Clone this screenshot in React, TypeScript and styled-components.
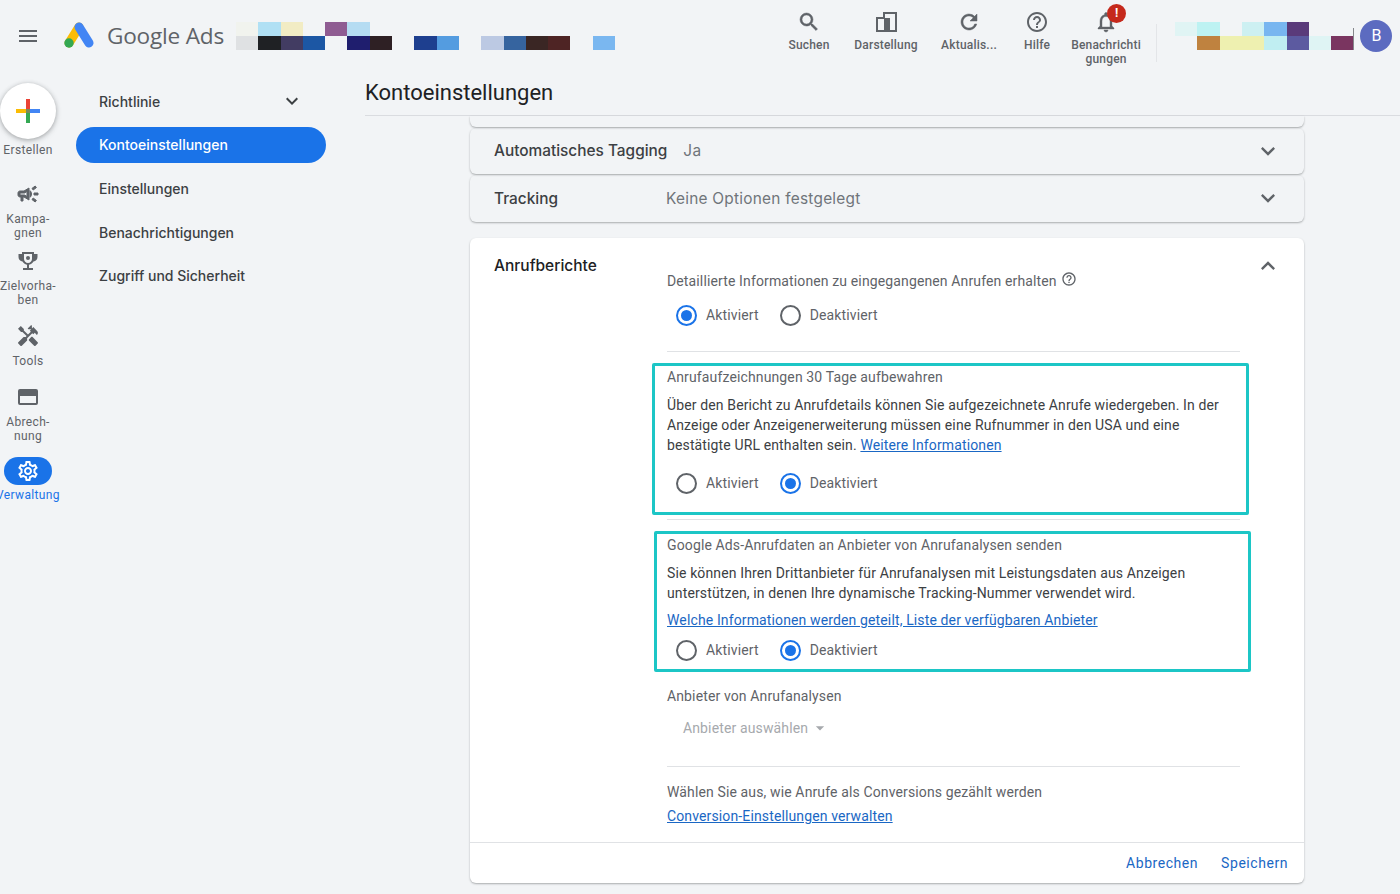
import React from 'react';
import styled, { createGlobalStyle } from 'styled-components';
import {
    MdMenu,
    MdSearch,
    MdRefresh,
    MdHelpOutline,
    MdNotificationsNone,
    MdOutlineCampaign,
    MdHandyman,
    MdOutlineSettings,
    MdKeyboardArrowDown,
    MdKeyboardArrowUp,
    MdArrowDropDown,
} from 'react-icons/md';

const GlobalStyle = createGlobalStyle`
    html, body {
        margin: 0;
        padding: 0;
        background: #f2f4f6;
    }
    * {
        box-sizing: border-box;
    }
    body {
        font-family: Roboto, "Liberation Sans", sans-serif;
    }
`;

const Page = styled.div`
    width: 1400px;
    height: 894px;
    overflow: hidden;
    display: flex;
    flex-direction: column;
    background: #f2f4f6;
`;

const Header = styled.header`
    height: 78px;
    flex: none;
    display: flex;
    align-items: flex-start;
`;

const MenuButton = styled.div`
    width: 56px;
    height: 72px;
    display: flex;
    align-items: center;
    justify-content: center;
    color: #5f6368;
    font-size: 24px;
`;

const Logo = styled.svg`
    width: 30px;
    height: 26px;
    margin: 22px 0 0 8px;
`;

const Brand = styled.div`
    margin: 20px 0 0 13px;
    width: 129px;
    font-family: "Open Sans", Roboto, sans-serif;
    font-size: 22.6px;
    line-height: 32px;
    letter-spacing: -0.2px;
    color: #5f6368;
`;

const Mosaic = styled.div<{ $cols: number }>`
    display: grid;
    grid-template-columns: repeat(${(p) => p.$cols}, 22.3px);
    grid-auto-rows: 14px;
    margin-top: 22px;
`;

const Cell = styled.div<{ $c: string }>`
    background: ${(p) => p.$c};
`;

const MosaicEdge = styled.div`
    width: 1px;
    height: 22px;
    margin-top: 28px;
    background: #85878b;
`;

const Actions = styled.div`
    margin-left: 162px;
    display: flex;
    align-items: flex-start;
`;

const Action = styled.div<{ $w: number }>`
    width: ${(p) => p.$w}px;
    padding-top: 10px;
    display: flex;
    flex-direction: column;
    align-items: center;
    color: #5f6368;
`;

const ActionIcon = styled.div`
    position: relative;
    height: 24px;
    font-size: 24px;
    line-height: 0;
    svg path[fill='none'] {
        stroke: none;
    }
`;

const Badge = styled.span`
    position: absolute;
    top: -6px;
    left: 13px;
    width: 19px;
    height: 19px;
    border-radius: 50%;
    background: #c5291c;
    color: #fff;
    font-size: 12px;
    font-weight: 700;
    line-height: 19px;
    text-align: center;
`;

const ActionLabel = styled.div`
    margin-top: 4px;
    font-size: 12px;
    line-height: 14px;
    font-weight: 500;
    letter-spacing: 0.2px;
    text-align: center;
    color: #5f6368;
`;

const HeaderDivider = styled.div`
    width: 1px;
    height: 38px;
    margin: 24px 18px 0 11px;
    background: #e3e5e8;
`;

const Avatar = styled.div`
    width: 32px;
    height: 32px;
    margin: 20px 0 0 6px;
    border-radius: 50%;
    background: #5c6bc0;
    color: #fff;
    font-size: 16px;
    line-height: 32px;
    text-align: center;
`;

const Body = styled.div`
    flex: 1;
    min-height: 0;
    display: flex;
`;

const Rail = styled.nav`
    width: 56px;
    flex: none;
    padding-top: 5px;
    display: flex;
    flex-direction: column;
    align-items: center;
`;

const CreateCircle = styled.div`
    width: 56px;
    height: 56px;
    flex: none;
    border-radius: 50%;
    background: #fff;
    box-shadow: 0 1px 4px rgba(60, 64, 67, 0.35), 0 2px 6px rgba(60, 64, 67, 0.15);
    display: flex;
    align-items: center;
    justify-content: center;
`;

const RailItem = styled.div<{ $top: number }>`
    width: 56px;
    margin-top: ${(p) => p.$top}px;
    display: flex;
    flex-direction: column;
    align-items: center;
    color: #5f6368;
`;

const RailIcon = styled.div`
    height: 24px;
    font-size: 24px;
    line-height: 0;
    svg path[fill='none'] {
        stroke: none;
    }
`;

const RailPill = styled.div`
    width: 48px;
    height: 28px;
    border-radius: 14px;
    background: #1a73e8;
    color: #fff;
    font-size: 24px;
    display: flex;
    align-items: center;
    justify-content: center;
`;

const RailLabel = styled.div<{ $active?: boolean; $top?: number }>`
    margin-top: ${(p) => p.$top ?? 6}px;
    font-size: 12px;
    line-height: 14px;
    font-weight: 400;
    letter-spacing: 0.35px;
    text-align: center;
    white-space: nowrap;
    color: ${(p) => (p.$active ? '#1a73e8' : '#5f6368')};
`;

const SubNav = styled.nav`
    width: 250px;
    flex: none;
    margin-left: 20px;
    padding-top: 5px;
    display: flex;
    flex-direction: column;
    gap: 7.7px;
`;

const SubItem = styled.div<{ $active?: boolean }>`
    height: 36px;
    padding: 0 22px 0 23px;
    border-radius: 18px;
    display: flex;
    align-items: center;
    justify-content: space-between;
    font-family: Inter, Roboto, sans-serif;
    font-size: 14px;
    font-weight: 500;
    color: ${(p) => (p.$active ? '#fff' : '#3c4043')};
    background: ${(p) => (p.$active ? '#1a73e8' : 'transparent')};
    svg {
        font-size: 24px;
        color: #3c4043;
    }
`;

const Main = styled.main`
    flex: 1;
    min-width: 0;
    margin-left: 39px;
    display: flex;
    flex-direction: column;
`;

const Title = styled.h1`
    height: 38px;
    margin: 0;
    padding-top: 1px;
    flex: none;
    border-bottom: 1px solid #dadce0;
    font-size: 22px;
    font-weight: 400;
    line-height: 28px;
    color: #202124;
`;

const Content = styled.div`
    width: 834px;
    margin-left: 105px;
    display: flex;
    flex-direction: column;
`;

const ClippedCard = styled.div`
    height: 11px;
    border-radius: 0 0 6px 6px;
    box-shadow: 0 1px 2px rgba(60, 64, 67, 0.4);
`;

const Row = styled.div<{ $height: number }>`
    height: ${(p) => p.$height}px;
    margin-top: 1px;
    padding: 0 24px 1px;
    border-radius: 6px;
    box-shadow: 0 1px 2px rgba(60, 64, 67, 0.4);
    display: flex;
    align-items: center;
    font-family: Inter, Roboto, sans-serif;
    font-size: 15.4px;
    svg {
        margin: 0 -2px 0 auto;
        font-size: 28px;
        color: #5f6368;
    }
`;

const RowTitle = styled.div`
    font-weight: 500;
    color: #3c4043;
`;

const RowValue = styled.div<{ $left: number }>`
    margin-left: ${(p) => p.$left}px;
    color: #70757a;
    font-weight: 400;
    letter-spacing: 0.25px;
`;

const Card = styled.section`
    height: 645px;
    margin-top: 16px;
    border-radius: 6px;
    background: #fff;
    box-shadow: 0 1px 2px rgba(60, 64, 67, 0.4);
    display: flex;
    flex-direction: column;
`;

const CardMain = styled.div`
    flex: 1;
    padding: 0 24px;
    display: flex;
`;

const CardTitle = styled.h2`
    width: 173px;
    flex: none;
    margin: 17px 0 0;
    font-family: Inter, Roboto, sans-serif;
    font-size: 15.5px;
    line-height: 22px;
    font-weight: 500;
    color: #202124;
`;

const Fields = styled.div`
    width: 573px;
    flex: none;
    padding-top: 33px;
`;

const Collapse = styled.div`
    margin: 14px -2px 0 auto;
    font-size: 28px;
    line-height: 0;
    color: #5f6368;
`;

const Caption = styled.div<{ $top?: number }>`
    margin-top: ${(p) => p.$top ?? 0}px;
    display: flex;
    align-items: center;
    gap: 4px;
    font-size: 14px;
    line-height: 20px;
    letter-spacing: 0.13px;
    color: #5f6368;
    svg {
        font-size: 16px;
        margin-top: -4px;
    }
`;

const Text = styled.p<{ $top?: number }>`
    margin: ${(p) => p.$top ?? 0}px 0 0;
    font-size: 14px;
    line-height: 20px;
    letter-spacing: 0.13px;
    color: #3c4043;
`;

const Link = styled.a`
    color: #1a67c4;
    text-decoration: underline;
`;

const RadioRow = styled.div<{ $top: number }>`
    margin-top: ${(p) => p.$top}px;
    padding-left: 9px;
    height: 24px;
    display: flex;
    align-items: center;
`;

const RadioItem = styled.label`
    display: flex;
    align-items: center;
    margin-right: 21px;
    font-size: 14px;
    letter-spacing: 0.13px;
    color: #5f6368;
`;

const RadioMark = styled.span<{ $on?: boolean }>`
    width: 21px;
    height: 21px;
    margin-right: 9px;
    border-radius: 50%;
    border: 2px solid ${(p) => (p.$on ? '#1a73e8' : '#5f6368')};
    display: flex;
    align-items: center;
    justify-content: center;
    &::after {
        content: '';
        width: 11px;
        height: 11px;
        border-radius: 50%;
        background: ${(p) => (p.$on ? '#1a73e8' : 'transparent')};
    }
`;

const Divider = styled.hr<{ $top: number }>`
    height: 1px;
    margin: ${(p) => p.$top}px 0 0;
    border: 0;
    background: #e0e2e5;
`;

const Highlight = styled.div<{ $left: number; $right: number; $top: number; $height: number }>`
    height: ${(p) => p.$height}px;
    margin: ${(p) => p.$top}px ${(p) => -p.$right}px 0 ${(p) => -p.$left}px;
    padding: 1px 0 0 ${(p) => p.$left - 3}px;
    border: 3px solid #1cc6c6;
    border-radius: 2px;
`;

const Select = styled.div`
    margin: 10px 0 0 16px;
    display: flex;
    align-items: center;
    font-size: 14px;
    line-height: 24px;
    letter-spacing: 0.13px;
    color: #a6a9ad;
    svg {
        font-size: 20px;
        margin-left: 2px;
    }
`;

const CardFooter = styled.footer`
    height: 41px;
    flex: none;
    padding: 0 16px;
    border-top: 1px solid #e0e2e5;
    display: flex;
    align-items: center;
    justify-content: flex-end;
    gap: 23px;
`;

const FooterButton = styled.span`
    font-size: 14px;
    font-weight: 400;
    letter-spacing: 0.55px;
    color: #1a67c4;
`;

const headerLeftCells = [
    '#f1f3ee', '#b0e0f4', '#f2ecc4', 'transparent', '#8f5c92', '#b5dcf2', 'transparent', 'transparent', 'transparent', 'transparent', 'transparent', 'transparent', 'transparent', 'transparent', 'transparent', 'transparent', 'transparent',
    '#dfe1e3', '#1f2124', '#423c62', '#1c57a4', 'transparent', '#1f1e6e', '#2e2024', 'transparent', '#1e3f8f', '#549ce0', 'transparent', '#bcc9e3', '#36649f', '#3a2624', '#4e2424', 'transparent', '#7ab7f0',
];

const headerRightCells = [
    '#e0f4f4', '#bdf2f2', 'transparent', '#cdf0f2', '#78b6f0', '#5a3a7a', 'transparent', 'transparent',
    'transparent', '#bf823f', '#eef0b0', '#eef0b0', '#c0eef2', '#5c5aa0', '#dff4f4', '#7a3560',
];

const AdsLogo = () => (
    <Logo viewBox="0 0 30 26">
        <line x1="15" y1="5" x2="5" y2="21" stroke="#fbbc04" strokeWidth="9" strokeLinecap="round" />
        <line x1="15" y1="5" x2="25" y2="21" stroke="#4285f4" strokeWidth="9" strokeLinecap="round" />
        <circle cx="5" cy="21" r="4.7" fill="#34a853" />
    </Logo>
);

const PlusIcon = () => (
    <svg width="24" height="24" viewBox="0 0 24 24">
        <rect x="0" y="10" width="10" height="4" fill="#fbbc04" />
        <rect x="10" y="0" width="4" height="10" fill="#ea4335" />
        <rect x="14" y="10" width="10" height="4" fill="#4285f4" />
        <rect x="10" y="14" width="4" height="10" fill="#34a853" />
        <rect x="10" y="10" width="4" height="4" fill="#7a8a5a" />
    </svg>
);

const ViewIcon = () => (
    <svg width="24" height="24" viewBox="0 0 24 24" fill="none">
        <path d="M10 3h12v18H3V8h7z" stroke="#5f6368" strokeWidth="2" />
        <rect x="10" y="8" width="6" height="13" fill="#5f6368" />
    </svg>
);

const TrophyIcon = () => (
    <svg width="24" height="24" viewBox="0 0 24 24" fill="#5f6368">
        <path
            fillRule="evenodd"
            d="M6 3h12v2h3.500v3c0 2.300-1.700 4.200-4 4.500-.8 1.600-2.400 2.800-4.500 3.200V19h4v2H7v-2h4v-3.300c-2.100-.4-3.700-1.600-4.500-3.200-2.300-.3-4-2.200-4-4.500V5H6zm2 2v5c0 2.200 1.800 4 4 4s4-1.800 4-4V5z"
        />
        <circle cx="12" cy="9" r="2" />
    </svg>
);

const CardIcon = () => (
    <svg width="24" height="24" viewBox="0 0 24 24" fill="#5f6368">
        <path
            fillRule="evenodd"
            d="M4 4h16a2 2 0 0 1 2 2v12a2 2 0 0 1-2 2H4a2 2 0 0 1-2-2V6a2 2 0 0 1 2-2zm0 7v7h16v-7z"
        />
    </svg>
);

const Radios = ({ top, on }: { top: number; on: 'a' | 'd' }) => (
    <RadioRow $top={top}>
        <RadioItem>
            <RadioMark $on={on === 'a'} />
            Aktiviert
        </RadioItem>
        <RadioItem>
            <RadioMark $on={on === 'd'} />
            Deaktiviert
        </RadioItem>
    </RadioRow>
);

const App: React.FC = () => {
    return (
        <Page>
            <GlobalStyle />
            <Header>
                <MenuButton>
                    <MdMenu />
                </MenuButton>
                <AdsLogo />
                <Brand>Google Ads</Brand>
                <Mosaic $cols={17}>
                    {headerLeftCells.map((c, i) => (
                        <Cell key={i} $c={c} />
                    ))}
                </Mosaic>
                <Actions>
                    <Action $w={64}>
                        <ActionIcon><MdSearch stroke="currentColor" strokeWidth={0.5} /></ActionIcon>
                        <ActionLabel>Suchen</ActionLabel>
                    </Action>
                    <Action $w={90}>
                        <ActionIcon><ViewIcon /></ActionIcon>
                        <ActionLabel>Darstellung</ActionLabel>
                    </Action>
                    <Action $w={76}>
                        <ActionIcon><MdRefresh stroke="currentColor" strokeWidth={0.5} /></ActionIcon>
                        <ActionLabel>Aktualis...</ActionLabel>
                    </Action>
                    <Action $w={60}>
                        <ActionIcon><MdHelpOutline /></ActionIcon>
                        <ActionLabel>Hilfe</ActionLabel>
                    </Action>
                    <Action $w={78}>
                        <ActionIcon>
                            <MdNotificationsNone stroke="currentColor" strokeWidth={0.4} />
                            <Badge>!</Badge>
                        </ActionIcon>
                        <ActionLabel>Benachrichti<br />gungen</ActionLabel>
                    </Action>
                </Actions>
                <HeaderDivider />
                <Mosaic $cols={8}>
                    {headerRightCells.map((c, i) => (
                        <Cell key={i} $c={c} />
                    ))}
                </Mosaic>
                <MosaicEdge />
                <Avatar>B</Avatar>
            </Header>
            <Body>
                <Rail>
                    <CreateCircle>
                        <PlusIcon />
                    </CreateCircle>
                    <RailLabel $top={4}>Erstellen</RailLabel>
                    <RailItem $top={25}>
                        <RailIcon><MdOutlineCampaign stroke="currentColor" strokeWidth={1} /></RailIcon>
                        <RailLabel>Kampa-<br />gnen</RailLabel>
                    </RailItem>
                    <RailItem $top={9}>
                        <RailIcon><TrophyIcon /></RailIcon>
                        <RailLabel>Zielvorha-<br />ben</RailLabel>
                    </RailItem>
                    <RailItem $top={17}>
                        <RailIcon><MdHandyman /></RailIcon>
                        <RailLabel>Tools</RailLabel>
                    </RailItem>
                    <RailItem $top={17}>
                        <RailIcon><CardIcon /></RailIcon>
                        <RailLabel>Abrech-<br />nung</RailLabel>
                    </RailItem>
                    <RailItem $top={14}>
                        <RailPill><MdOutlineSettings /></RailPill>
                        <RailLabel $active $top={3}>Verwaltung</RailLabel>
                    </RailItem>
                </Rail>
                <SubNav>
                    <SubItem>
                        Richtlinie
                        <MdKeyboardArrowDown />
                    </SubItem>
                    <SubItem $active>Kontoeinstellungen</SubItem>
                    <SubItem>Einstellungen</SubItem>
                    <SubItem>Benachrichtigungen</SubItem>
                    <SubItem>Zugriff und Sicherheit</SubItem>
                </SubNav>
                <Main>
                    <Title>Kontoeinstellungen</Title>
                    <Content>
                        <ClippedCard />
                        <Row $height={46}>
                            <RowTitle>Automatisches Tagging</RowTitle>
                            <RowValue $left={16}>Ja</RowValue>
                            <MdKeyboardArrowDown />
                        </Row>
                        <Row $height={47}>
                            <RowTitle>Tracking</RowTitle>
                            <RowValue $left={108}>Keine Optionen festgelegt</RowValue>
                            <MdKeyboardArrowDown />
                        </Row>
                        <Card>
                            <CardMain>
                                <CardTitle>Anrufberichte</CardTitle>
                                <Fields>
                                    <Caption>
                                        Detaillierte Informationen zu eingegangenen Anrufen erhalten
                                        <MdHelpOutline />
                                    </Caption>
                                    <Radios top={12} on="a" />
                                    <Divider $top={24} />
                                    <Highlight $left={15} $right={9} $top={11} $height={152}>
                                        <Caption>Anrufaufzeichnungen 30 Tage aufbewahren</Caption>
                                        <Text $top={8}>
                                            Über den Bericht zu Anrufdetails können Sie aufgezeichnete Anrufe wiedergeben. In der
                                            Anzeige oder Anzeigenerweiterung müssen eine Rufnummer in den USA und eine
                                            bestätigte URL enthalten sein. <Link>Weitere Informationen</Link>
                                        </Text>
                                        <Radios top={16} on="d" />
                                    </Highlight>
                                    <Divider $top={4} />
                                    <Highlight $left={13} $right={11} $top={11} $height={141}>
                                        <Caption>Google Ads-Anrufdaten an Anbieter von Anrufanalysen senden</Caption>
                                        <Text $top={8}>
                                            Sie können Ihren Drittanbieter für Anrufanalysen mit Leistungsdaten aus Anzeigen
                                            unterstützen, in denen Ihre dynamische Tracking-Nummer verwendet wird.
                                        </Text>
                                        <Text $top={7}>
                                            <Link>Welche Informationen werden geteilt, Liste der verfügbaren Anbieter</Link>
                                        </Text>
                                        <Radios top={8} on="d" />
                                    </Highlight>
                                    <Caption $top={14}>Anbieter von Anrufanalysen</Caption>
                                    <Select>
                                        Anbieter auswählen
                                        <MdArrowDropDown />
                                    </Select>
                                    <Divider $top={26} />
                                    <Caption $top={15}>Wählen Sie aus, wie Anrufe als Conversions gezählt werden</Caption>
                                    <Text $top={4}>
                                        <Link>Conversion-Einstellungen verwalten</Link>
                                    </Text>
                                </Fields>
                                <Collapse>
                                    <MdKeyboardArrowUp />
                                </Collapse>
                            </CardMain>
                            <CardFooter>
                                <FooterButton>Abbrechen</FooterButton>
                                <FooterButton>Speichern</FooterButton>
                            </CardFooter>
                        </Card>
                    </Content>
                </Main>
            </Body>
        </Page>
    );
};

export default App;
